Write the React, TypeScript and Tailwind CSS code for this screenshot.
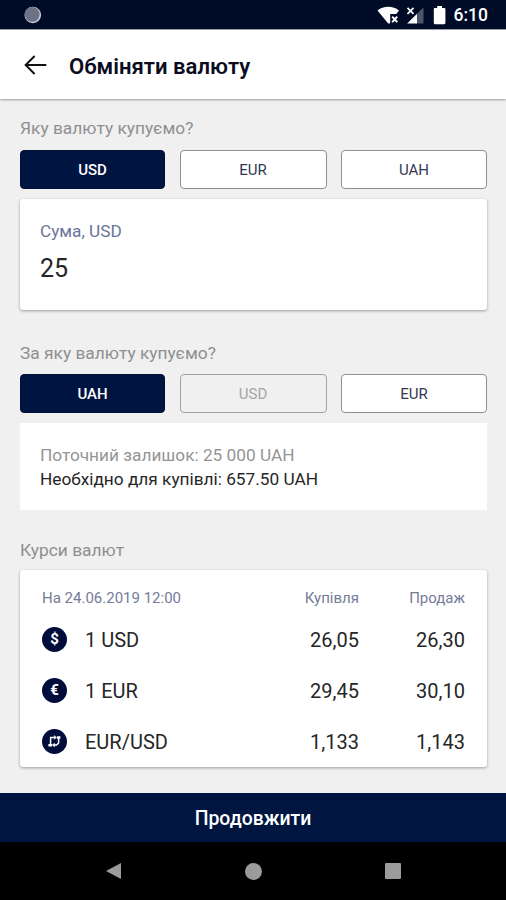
import React from 'react';
import clsx from 'clsx';

type TabState = 'active' | 'idle' | 'disabled';

interface CurrencyTab {
  code: string;
  state: TabState;
}

const buyTabs: CurrencyTab[] = [
  { code: 'USD', state: 'active' },
  { code: 'EUR', state: 'idle' },
  { code: 'UAH', state: 'idle' },
];

const payTabs: CurrencyTab[] = [
  { code: 'UAH', state: 'active' },
  { code: 'USD', state: 'disabled' },
  { code: 'EUR', state: 'idle' },
];

const rates = [
  { icon: 'dollar', name: '1 USD', buy: '26,05', sell: '26,30' },
  { icon: 'euro', name: '1 EUR', buy: '29,45', sell: '30,10' },
  { icon: 'swap', name: 'EUR/USD', buy: '1,133', sell: '1,143' },
];

const StatusBar: React.FC = () => (
  <div className="flex h-[29px] shrink-0 items-center justify-between bg-[#000c27] pl-6 pr-[18px] pt-0.5">
    <svg width="18" height="18" viewBox="0 0 18 18" className="-mt-px">
      <circle cx="8.8" cy="9" r="8.3" fill="#c9ced8" />
      <circle cx="8.2" cy="8.4" r="7.4" fill="#6d7385" />
    </svg>
    <div className="flex items-center">
      {/* wifi, signal, battery */}
      <svg width="70" height="20" viewBox="0 0 70 20" className="-mt-px mr-[7px]">
        <path d="M0.5 5.5C6.5 0.6 16 0.6 22 5.5L19.3 9H13.2V18.2L11.2 18.4Z" fill="#fff" />
        <path d="M15.2 11.6L20.2 17.2M20.2 11.6L15.2 17.2" stroke="#fff" strokeWidth="2" />
        <path d="M46.5 2.2V18.5H40V8.7Z" fill="#4d556b" />
        <path d="M40 8.7V18.5H30.2Z" fill="#fff" />
        <path d="M30.5 2.8L36.5 8.8M36.5 2.8L30.5 8.8" stroke="#fff" strokeWidth="1.7" />
        <path d="M60.2 1H65V3H67.2C67.9 3 68.4 3.5 68.4 4.2V18C68.4 18.7 67.9 19.2 67.2 19.2H58C57.3 19.2 56.8 18.7 56.8 18V4.2C56.8 3.5 57.3 3 58 3H60.2Z" fill="#fff" />
      </svg>
      <span className="text-[17.5px] font-medium leading-none text-white">6:10</span>
    </div>
  </div>
);

const Header: React.FC = () => (
  <header className="z-10 flex h-[70px] shrink-0 items-center border-t border-[#9a9ba5] bg-white pl-6 shadow-[0_1px_2px_rgba(0,0,0,0.35)]">
    <svg width="23" height="20" viewBox="0 0 23 20" fill="none" stroke="#111" strokeWidth="1.9" className="mr-[22px]">
      <path d="M22.3 10H1.8M10.6 1L1.6 10L10.6 19" />
    </svg>
    <h1 className="pt-[3px] text-[22.1px] font-semibold leading-6 text-[#0a0d22]">Обміняти валюту</h1>
  </header>
);

const SectionLabel: React.FC<{ children: React.ReactNode }> = ({ children }) => (
  <h2 className="text-[17.35px] leading-5 text-[#8f8f8f]">{children}</h2>
);

const CurrencyTabs: React.FC<{ tabs: CurrencyTab[] }> = ({ tabs }) => (
  <div className="grid grid-cols-[145px_147px_146px] justify-between">
    {tabs.map(({ code, state }) => (
      <button
        key={code}
        disabled={state === 'disabled'}
        className={clsx(
          'h-[39px] rounded-[4px] border pt-px text-[15px]',
          state === 'active' && 'border-[#000f35] bg-[#001442] font-medium text-white',
          state === 'idle' && 'border-[#8e8e93] bg-white text-[#333853]',
          state === 'disabled' && 'border-[#a3a3a3] bg-[#f0f0f0] text-[#a6a6a6]',
        )}
      >
        {code}
      </button>
    ))}
  </div>
);

const RateIcon: React.FC<{ name: string }> = ({ name }) => (
  <span className="flex size-[25px] items-center justify-center rounded-full bg-[#000d3a] text-[15px] font-bold leading-none text-white">
    {name === 'dollar' && '$'}
    {name === 'euro' && '€'}
    {name === 'swap' && (
      <svg width="15" height="15" viewBox="0 0 15 15" fill="none" stroke="#fff" strokeWidth="1.5">
        <path d="M3.6 11.5V3.4H7.6" />
        <path d="M11.6 3.4V9L9.6 11H7" />
        <path d="M1.4 11.2H5M10 3.5H13.4" strokeWidth="2.4" />
        <path d="M7.2 1.6L9.6 3.4L7.2 5.2ZM7.6 9.2L5.2 11L7.6 12.8Z" fill="#fff" strokeWidth="0.5" />
      </svg>
    )}
  </span>
);

const RatesCard: React.FC = () => (
  <div className="h-[197px] rounded-[3px] bg-white pl-[22px] pr-[22px] pt-[17px] shadow-[0_1px_3px_rgba(0,0,0,0.35)]">
    <div className="grid h-[22px] grid-cols-[1fr_106px_106px] items-center text-[15px] text-[#757b98]">
      <span>На 24.06.2019 12:00</span>
      <span className="text-right">Купівля</span>
      <span className="text-right">Продаж</span>
    </div>
    <div className="pt-[5px]">
      {rates.map((rate) => (
        <div
          key={rate.name}
          className="grid h-[51px] grid-cols-[43px_1fr_106px_106px] items-center text-[20px] text-[#262626]"
        >
          <RateIcon name={rate.icon} />
          <span>{rate.name}</span>
          <span className="text-right">{rate.buy}</span>
          <span className="text-right">{rate.sell}</span>
        </div>
      ))}
    </div>
  </div>
);

const NavBar: React.FC = () => (
  <nav className="flex h-[58px] shrink-0 items-center justify-between bg-black px-[105px]">
    <svg width="17" height="18" viewBox="0 0 17 18">
      <path d="M16 1V17L1 9Z" fill="#9b9b9b" />
    </svg>
    <span className="size-[17px] rounded-full bg-[#9b9b9b]" />
    <span className="size-4 rounded-[1px] bg-[#9b9b9b]" />
  </nav>
);

export default function App() {
  return (
    <div className="flex h-[900px] w-[506px] flex-col overflow-hidden bg-[#f0f0f0] font-[Roboto,sans-serif]">
      <StatusBar />
      <Header />

      <main className="flex-1 pl-5 pr-[19px] pt-[19px]">
        <SectionLabel>Яку валюту купуємо?</SectionLabel>
        <div className="pt-3">
          <CurrencyTabs tabs={buyTabs} />
        </div>
        <div className="mt-[10px] h-[111px] rounded-[3px] bg-white px-5 pt-[22px] shadow-[0_1px_3px_rgba(0,0,0,0.35)]">
          <p className="text-[17.2px] leading-5 text-[#69749a]">Сума, USD</p>
          <p className="pt-3 text-[25px] leading-8 text-[#262626]">25</p>
        </div>

        <div className="pt-[33px]">
          <SectionLabel>За яку валюту купуємо?</SectionLabel>
        </div>
        <div className="pt-[11px]">
          <CurrencyTabs tabs={payTabs} />
        </div>
        <div className="mt-[10px] h-[87px] bg-white px-5 pt-5 text-[17.25px] leading-6">
          <p className="text-[#959595]">Поточний залишок: 25 000 UAH</p>
          <p className="text-[#262626]">Необхідно для купівлі: 657.50 UAH</p>
        </div>

        <div className="pb-[10px] pt-[30px]">
          <SectionLabel>Курси валют</SectionLabel>
        </div>
        <RatesCard />
      </main>

      <button className="h-[49px] shrink-0 bg-[#001540] pt-0.5 text-[19.4px] font-medium text-white">Продовжити</button>
      <NavBar />
    </div>
  );
}
